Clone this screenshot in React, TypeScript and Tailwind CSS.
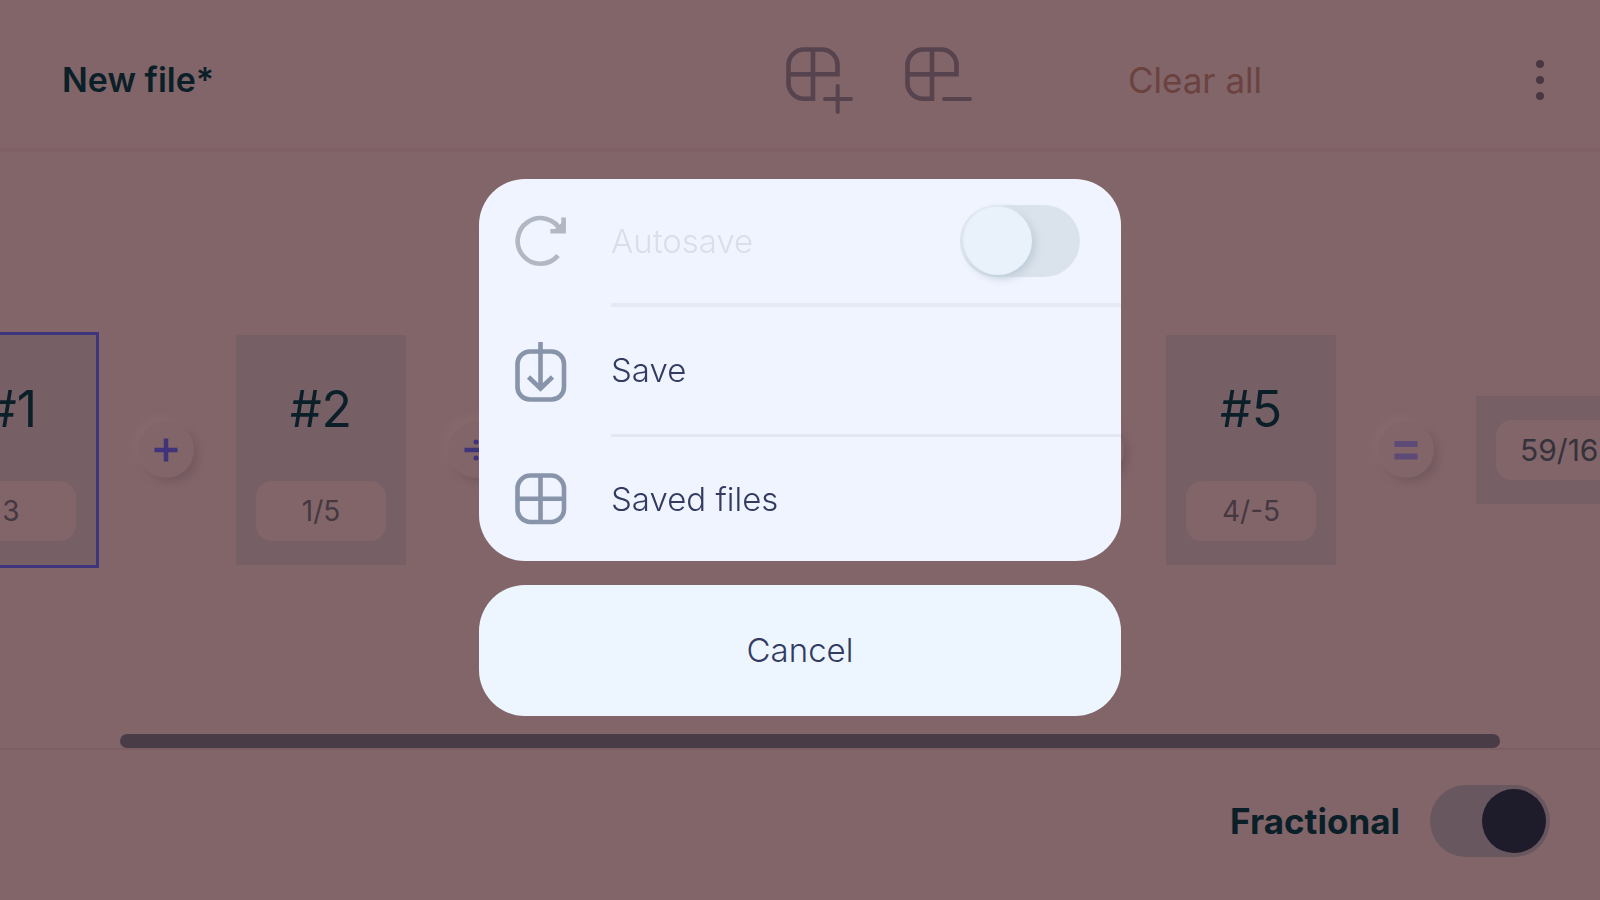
import type { ReactNode } from "react";

type Cell = { name?: string; label: string; value: string; operator: string; selected?: boolean };

const cells: Cell[] = [
  { name: "#1", label: "Cell 1", value: "3", operator: "plus", selected: true },
  { name: "#2", label: "Cell 2", value: "1/5", operator: "divide" },
  { label: "Cell 3", value: "", operator: "plus" },
  { label: "Cell 4", value: "", operator: "plus" },
  { name: "#5", label: "Cell 5", value: "4/-5", operator: "equals" },
];

function GridEditIcon({ add }: { add: boolean }) {
  return (
    <svg width="67" height="67" viewBox="0 0 67 67" fill="none" stroke="#57434e" strokeWidth="4.6" aria-hidden="true">
      <path d="M27 27.3H51.5V18A15.5 15.5 0 0 0 36 2.5H18A15.5 15.5 0 0 0 2.5 18V36A15.5 15.5 0 0 0 18 51.7H27V2.5" />
      <path d="M2.5 27.3H27" />
      <path d="M39 52H65" strokeLinecap="round" strokeWidth="4" />
      {add && <path d="M51.7 39V65" strokeLinecap="round" strokeWidth="4" />}
    </svg>
  );
}

function RefreshIcon() {
  return (
    <svg width="52" height="52" viewBox="0 0 52 52" fill="none" stroke="#b1b8c3" strokeWidth="4.6" aria-hidden="true">
      <path d="M43 40.5A22.8 22.8 0 1 1 46 16" />
      <path d="M48.6 2.6V16.3H35.4" />
      <path d="M39 15L47.5 7V15Z" fill="#b1b8c3" stroke="none" />
    </svg>
  );
}

function SaveIcon() {
  return (
    <svg width="52" height="60" viewBox="0 0 52 60" fill="none" stroke="#8794aa" strokeWidth="4.6" aria-hidden="true">
      <rect x="2.5" y="9.5" width="46.5" height="48" rx="12.5" />
      <path d="M25.5 0V46.5M13.5 35L25.5 46.5L37.5 35" />
    </svg>
  );
}

function FilesIcon() {
  return (
    <svg width="52" height="52" viewBox="0 0 52 52" fill="none" stroke="#8794aa" strokeWidth="4.6" aria-hidden="true">
      <rect x="2.5" y="2.5" width="46.5" height="46.5" rx="13" />
      <path d="M25.5 2.5V49M2.5 25.7H49" />
    </svg>
  );
}

function OperatorIcon({ kind }: { kind: string }) {
  return (
    <svg width="24" height="24" viewBox="0 0 24 24" fill="none" stroke="#3f3479" strokeWidth="4.5" aria-hidden="true">
      {kind === "plus" && <path d="M0.5 12H23.5M12 0.5V23.5" />}
      {kind === "divide" && (
        <>
          <path d="M0.5 12H23.5" />
          <circle cx="12" cy="4" r="2.5" fill="#3f3479" stroke="none" />
          <circle cx="12" cy="20" r="2.5" fill="#3f3479" stroke="none" />
        </>
      )}
      {kind === "equals" && <path d="M0.5 6H23.5M0.5 18.5H23.5" stroke="#5d4a76" strokeWidth="6" />}
    </svg>
  );
}

function cellClass(cell: Cell) {
  if (!cell.name) return "flex h-27 w-[170px] flex-col items-center justify-center bg-[#776065] px-5";
  if (cell.selected)
    return "flex h-[230px] w-[170px] flex-col items-center justify-between bg-[#776065] px-5 pt-11 pb-6 ring-3 ring-[#3f357c]";
  return "flex h-[230px] w-[170px] flex-col items-center justify-between bg-[#776065] px-5 pt-11 pb-6";
}

function MenuRow({ icon, children, last }: { icon: ReactNode; children: ReactNode; last?: boolean }) {
  return (
    <li className={last ? "flex h-[124px] pl-9" : "flex h-[130px] pl-9"}>
      <div className="flex w-24 shrink-0 items-center">{icon}</div>
      <div className={last ? "flex flex-1 items-center" : "flex flex-1 items-center border-b-3 border-[#e2e8f2]"}>{children}</div>
    </li>
  );
}

export default function App() {
  return (
    <div className="flex min-h-screen flex-col overflow-hidden bg-[#826569] font-['Inter',sans-serif] text-[#0b1f28]">
      <header className="flex h-38 items-center border-b-4 border-[#7e6065] pt-3 pr-11 pl-[62px]">
        <h1 className="flex-1 text-[34px] leading-10 font-semibold">New file*</h1>
        <div className="mr-39 flex gap-13">
          <button type="button" aria-label="Add cell">
            <GridEditIcon add />
          </button>
          <button type="button" aria-label="Remove cell">
            <GridEditIcon add={false} />
          </button>
        </div>
        <button type="button" className="text-[35px] leading-10 text-[#6b423f]">
          Clear all
        </button>
        <button type="button" aria-label="More options" className="ml-[262px] flex w-8 flex-col items-center gap-2">
          <span className="size-2 rounded-full bg-[#493843]" />
          <span className="size-2 rounded-full bg-[#493843]" />
          <span className="size-2 rounded-full bg-[#493843]" />
        </button>
      </header>

      <main className="flex flex-1 flex-col border-b-2 border-[#7c5e63] pt-3.5">
        <div className="flex flex-1 items-center justify-center">
          {cells.map((cell) => (
            <div key={cell.label} className="flex shrink-0 items-center">
              <section className={cellClass(cell)}>
                {cell.name && <h2 className="text-[50px] leading-[60px]">{cell.name}</h2>}
                <input
                  aria-label={cell.label}
                  defaultValue={cell.value}
                  className="h-15 w-full rounded-2xl bg-[#826569] text-center text-[28px] text-[#453840]"
                />
              </section>
              <div className="flex w-[140px] justify-center">
                <button
                  type="button"
                  aria-label={cell.operator}
                  className="flex size-14 items-center justify-center rounded-full bg-[#826569] shadow-[5px_5px_7px_#755b60,-5px_-5px_9px_#866a6c]"
                >
                  <OperatorIcon kind={cell.operator} />
                </button>
              </div>
            </div>
          ))}
          <section className="flex h-27 w-[198px] shrink-0 items-center bg-[#776065] px-5">
            <output aria-label="Result" className="flex h-15 w-full items-center rounded-2xl bg-[#826569] px-6 text-[30px] text-[#35323b]">
              59/16
            </output>
          </section>
        </div>
        <div className="ml-30 h-3.5 w-[86.25%] rounded-full bg-[#4a3c46]" />
      </main>

      <footer className="flex h-[150px] items-center justify-end pr-[50px] pb-2">
        <label className="flex items-center gap-[30px] text-[35px] leading-10 font-bold">
          Fractional
          <input
            type="checkbox"
            role="switch"
            defaultChecked
            className="flex h-18 w-30 appearance-none items-center justify-end rounded-full bg-[#69575f] px-1 before:size-16 before:rounded-full before:bg-[#1e1b2b]"
          />
        </label>
      </footer>

      <div className="fixed inset-0 flex items-center justify-center pb-1.5">
        <div role="dialog" aria-modal="true" aria-label="File menu" className="flex w-[642px] flex-col gap-6 text-[33px] leading-10 font-light text-[#333b60]">
          <ul className="overflow-hidden rounded-[46px] bg-[#f0f4ff]">
            <li className="flex h-32 pl-9">
              <div className="flex w-24 shrink-0 items-center pb-1">
                <RefreshIcon />
              </div>
              <label className="flex flex-1 items-center justify-between border-b-4 border-[#e4e9f3] pr-[41px] text-[#dadee6]">
                Autosave
                <input
                  type="checkbox"
                  role="switch"
                  disabled
                  className="flex h-18 w-30 appearance-none items-center rounded-full bg-[#dae2eb] px-1 before:size-17 before:rounded-full before:bg-[#e9f2fb] before:shadow-[3px_3px_8px_#bccbd7,-1px_-1px_3px_#f8fbff]"
                />
              </label>
            </li>
            <MenuRow icon={<SaveIcon />}>
              <button type="button" className="flex-1 text-left">
                Save
              </button>
            </MenuRow>
            <MenuRow icon={<FilesIcon />} last>
              <button type="button" className="flex-1 text-left">
                Saved files
              </button>
            </MenuRow>
          </ul>
          <button type="button" className="h-[131px] rounded-[46px] bg-[#edf6ff]">
            Cancel
          </button>
        </div>
      </div>
    </div>
  );
}
